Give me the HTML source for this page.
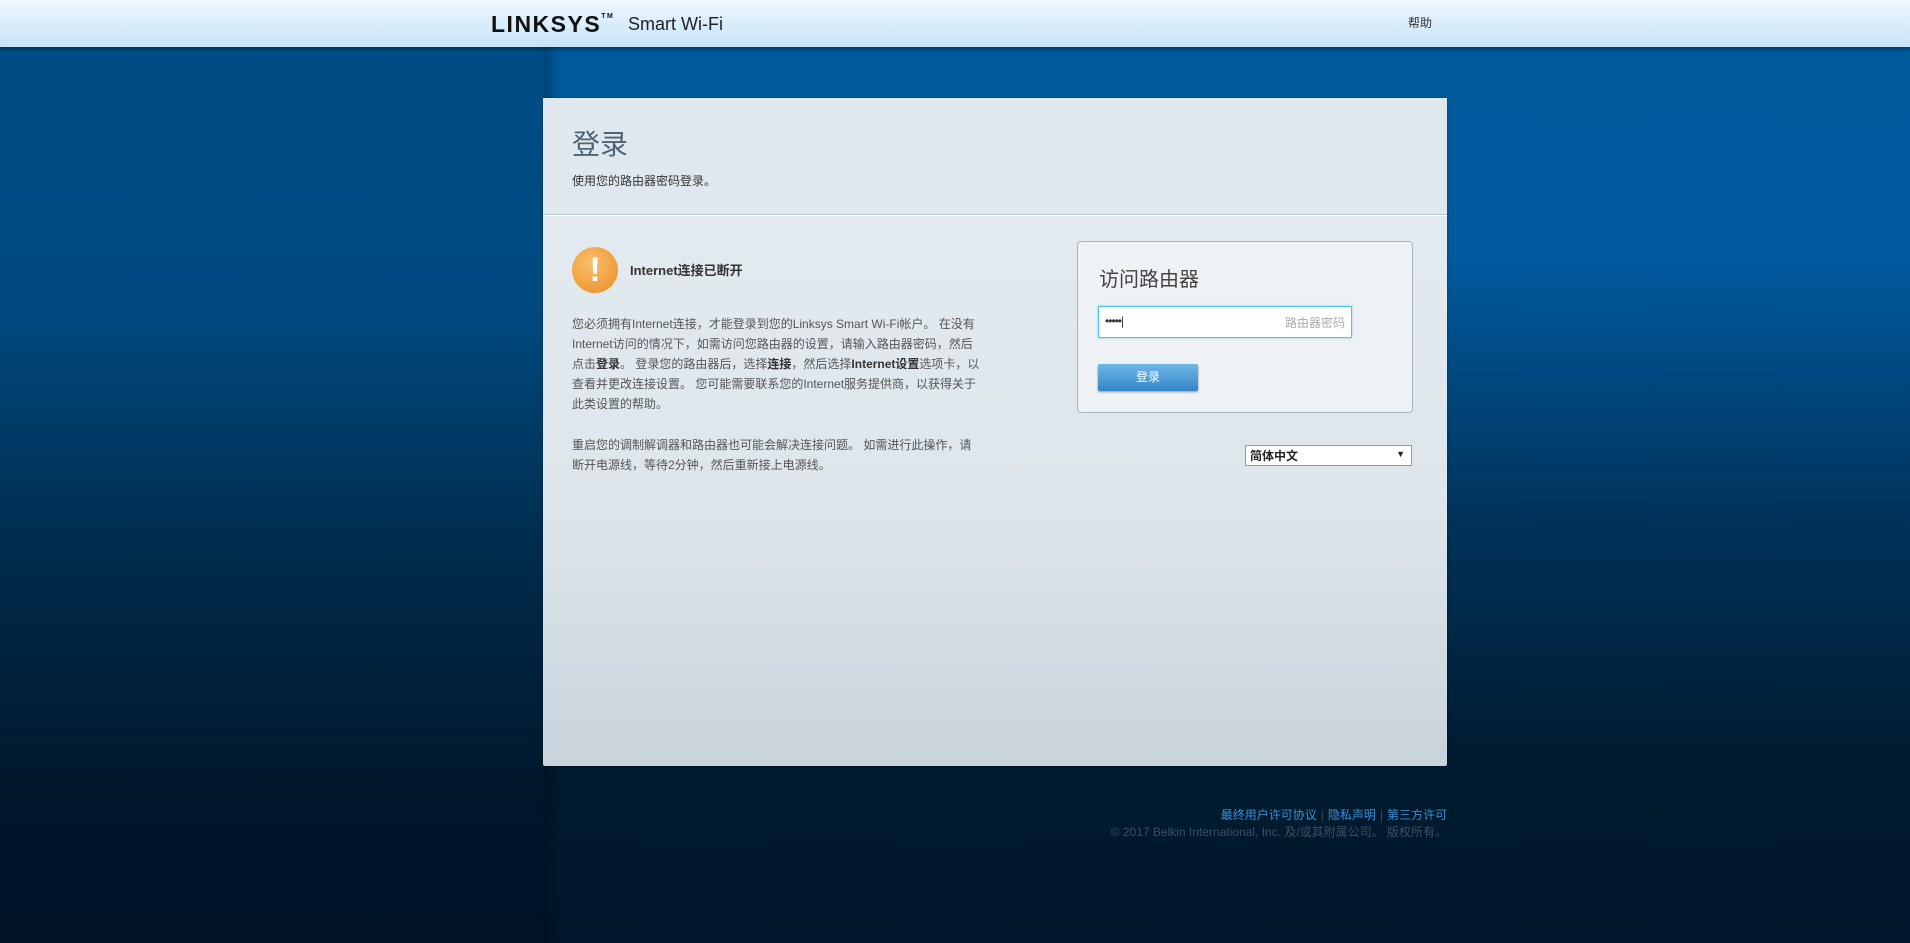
<!DOCTYPE html>
<html><head><meta charset="utf-8"><style>
*{margin:0;padding:0;box-sizing:border-box}
body{width:1910px;height:943px;overflow:hidden;font-family:"Liberation Sans","Noto Sans CJK SC",sans-serif;background:linear-gradient(#005a9c 47px,#005a9e 260px,#00335a 520px,#001b30 760px,#00172a 943px);position:relative}
.left{position:absolute;left:0;top:47px;width:543px;height:896px;background:linear-gradient(#004d86,#004a80 260px,#002a4a 520px,#001629 760px,#001426);}
.edge{position:absolute;left:543px;top:47px;width:18px;height:896px;background:linear-gradient(90deg,rgba(0,0,0,.25),rgba(0,0,0,0))}
.hdr{position:absolute;left:0;top:0;width:1910px;height:47px;background:linear-gradient(#eef7fd,#c6e4f8);box-shadow:0 2px 4px rgba(0,0,0,.4)}
.logo{position:absolute;left:491px;top:11px;font-weight:bold;font-size:23px;letter-spacing:1.5px;color:#111}
.logo sup{font-size:7px;vertical-align:top;position:relative;top:2px}
.sw{position:absolute;left:628px;top:14px;font-size:18px;color:#222}
.help{position:absolute;left:1408px;top:14px;font-size:12px;color:#333}
.card{position:absolute;left:543px;top:98px;width:904px;height:668px;background:linear-gradient(#e4ecf1,#dde6ec 60%,#c8d3dc);border-radius:2px;box-shadow:0 0 3px rgba(0,0,0,.3)}
.ch{height:117px;background:#dfe8ee;border-bottom:1px solid #b9c6cf;box-shadow:0 1px 0 #fff}
h1{position:absolute;left:29px;top:25px;font-size:28px;font-weight:normal;color:#4d6474}
.sub{position:absolute;left:29px;top:74px;font-size:12px;color:#333}
.icon{position:absolute;left:29px;top:149px;width:46px;height:46px;border-radius:50%;background:radial-gradient(circle at 40% 35%,#fbc06a,#f0a040 60%,#e08a2c);color:#fff;font-weight:bold;font-size:34px;text-align:center;line-height:46px}
.it{position:absolute;left:87px;top:162px;font-size:13px;font-weight:bold;color:#333}
.p{position:absolute;left:29px;width:410px;font-size:12px;line-height:20px;color:#555}
.p b{color:#333}
.box{position:absolute;left:534px;top:143px;width:336px;height:172px;border:1px solid #a7b3bc;border-radius:4px;background:#eef2f5}
.box h2{position:absolute;left:21px;top:21px;font-size:20px;font-weight:normal;color:#444}
.inp{position:absolute;left:20px;top:64px;width:254px;height:32px;border:1px solid #4cc4de;box-shadow:0 0 3px #8fdcee;background:#fff;font-size:12px}
.inp .d{position:absolute;left:6px;top:7px;color:#333;letter-spacing:-1px}
.inp .ph{position:absolute;right:6px;top:7px;color:#aaa}
.btn{position:absolute;left:20px;top:122px;width:100px;height:27px;border-radius:2px;background:linear-gradient(#6db6e6,#3585c8);box-shadow:0 1px 2px rgba(0,0,0,.4);color:#fff;font-size:12px;text-align:center;line-height:27px}
.sel{position:absolute;left:702px;top:347px;width:167px;height:21px;border:1px solid #999;background:#fff;font-size:12px;font-weight:bold;color:#222;padding:1px 4px}
.sel span{position:absolute;right:6px;top:3px;font-size:9px}
.fl{position:absolute;right:463px;top:806px;font-size:12px;color:#3b8fd6}
.fl i{color:#3a4a58;font-style:normal;margin:0 4px}
.fc{position:absolute;right:463px;top:823px;font-size:12px;color:#405060}
</style></head><body>
<div class="left"></div><div class="edge"></div>
<div class="hdr"><div class="logo">LINKSYS<sup>TM</sup></div><div class="sw">Smart Wi-Fi</div><div class="help">帮助</div></div>
<div class="card">
<div class="ch"></div>
<h1>登录</h1>
<div class="sub">使用您的路由器密码登录。</div>
<div class="icon">!</div>
<div class="it">Internet连接已断开</div>
<div class="p" style="top:216px">您必须拥有Internet连接，才能登录到您的Linksys Smart Wi-Fi帐户。 在没有Internet访问的情况下，如需访问您路由器的设置，请输入路由器密码，然后点击<b>登录</b>。 登录您的路由器后，选择<b>连接</b>，然后选择<b>Internet设置</b>选项卡，以查看并更改连接设置。 您可能需要联系您的Internet服务提供商，以获得关于此类设置的帮助。</div>
<div class="p" style="top:337px">重启您的调制解调器和路由器也可能会解决连接问题。 如需进行此操作，请断开电源线，等待2分钟，然后重新接上电源线。</div>
<div class="box"><h2>访问路由器</h2><div class="inp"><span class="d">•••••|</span><span class="ph">路由器密码</span></div><div class="btn">登录</div></div>
<div class="sel">简体中文<span>▼</span></div>
</div>
<div class="fl">最终用户许可协议<i>|</i>隐私声明<i>|</i>第三方许可</div>
<div class="fc">© 2017 Belkin International, Inc. 及/或其附属公司。 版权所有。</div>
</body></html>
